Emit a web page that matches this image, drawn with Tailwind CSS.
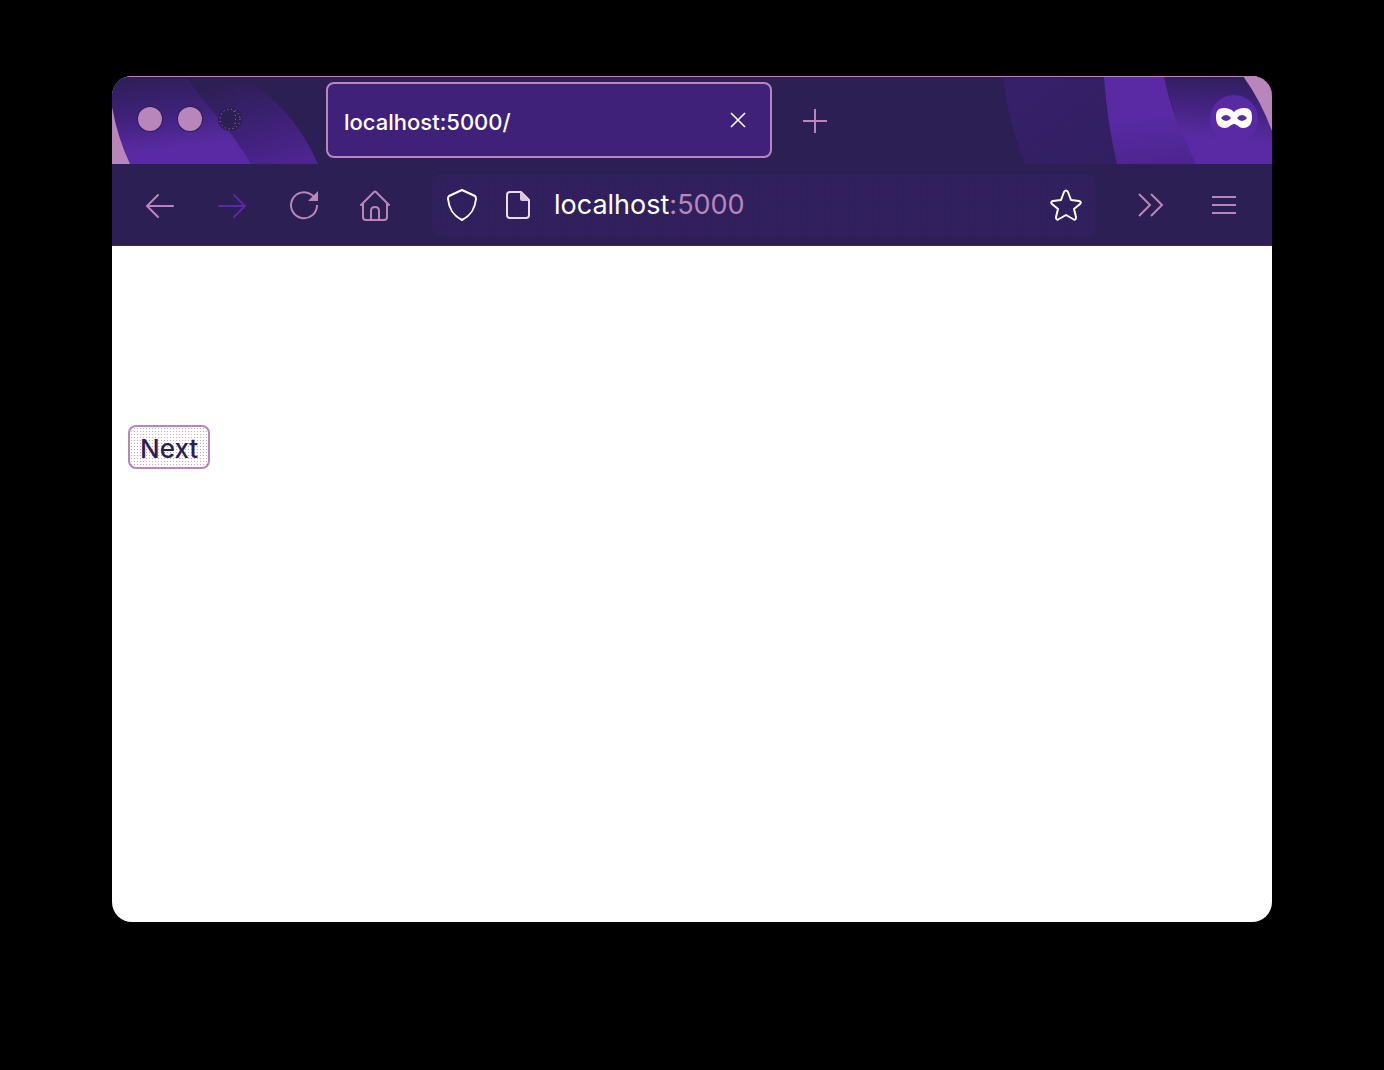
<!DOCTYPE html>
<html lang="en">
<head>
<meta charset="utf-8">
<title>localhost:5000/</title>
<script src="https://cdn.jsdelivr.net/npm/@tailwindcss/browser@4"></script>
</head>
<body class="flex min-h-screen flex-col bg-black px-28 pt-[76px] pb-[148px] font-['Inter','Liberation_Sans',sans-serif]">
<div class="flex grow flex-col overflow-hidden rounded-[20px] bg-white">
  <header class="bg-[#2b1f53]">
    <div class="relative flex h-22 items-center pr-4 pl-[26px] border-t border-[#b886bb]">
      <svg class="absolute -top-px left-0" width="206" height="88" viewBox="0 0 206 88" aria-hidden="true">
        <defs>
          <linearGradient id="l1" x1="0.3" y1="0" x2="0.5" y2="1"><stop offset="0" stop-color="#2f1f5b"/><stop offset=".4" stop-color="#3f2179"/><stop offset=".8" stop-color="#592aa3"/></linearGradient>
          <linearGradient id="l2" x1="0.3" y1="0" x2="0.8" y2="1"><stop offset="0" stop-color="#2b1f53"/><stop offset=".6" stop-color="#3f2179"/><stop offset="1" stop-color="#4d2590"/></linearGradient>
        </defs>
        <path d="M75 2Q110 2 142 9Q183 36 206 88H139Z" fill="url(#l2)"/>
        <path d="M0 2H75Q87 19 99 33Q123 61 139 88H0Z" fill="url(#l1)"/>
        <path d="M0 31Q6 63 18 88H0Z" fill="#b886bb"/>
        <path d="M0 0H206V1H0Z" fill="#b886bb"/>
      </svg>
      <svg class="absolute -top-px right-0" width="282" height="88" viewBox="0 0 282 88" aria-hidden="true">
        <defs>
          <linearGradient id="r1" x1="0" y1="0" x2="1" y2="1"><stop offset="0" stop-color="#37206b"/><stop offset="1" stop-color="#321f61"/></linearGradient>
          <linearGradient id="r2" x1="0.4" y1="0" x2="0.5" y2="1"><stop offset=".45" stop-color="#592aa3"/><stop offset="1" stop-color="#4d2590"/></linearGradient>
          <linearGradient id="r3" x1="0.5" y1="0" x2="0.4" y2="1"><stop offset="0" stop-color="#311f60"/><stop offset=".25" stop-color="#3f2179"/><stop offset=".7" stop-color="#592aa3"/></linearGradient>
        </defs>
        <path d="M13 2H114L127 88H35Q19 48 13 2Z" fill="url(#r1)"/>
        <path d="M174 2H282V88H200Z" fill="url(#r3)"/>
        <path d="M114 1H174Q181 33 193 59L206 88H127Q117 45 114 1Z" fill="url(#r2)"/>
        <path d="M253 0H282V55Q271 25 253 0Z" fill="#b886bb"/>
        <path d="M0 0H282V1H0Z" fill="#b886bb"/>
      </svg>
      <div class="relative flex gap-4 pb-1">
        <button aria-label="Close window" class="size-6 rounded-full bg-[#b886bb] ring-1 ring-[#2b1f53]"></button>
        <button aria-label="Minimize window" class="size-6 rounded-full bg-[#b886bb] ring-1 ring-[#2b1f53]"></button>
        <button aria-label="Zoom window" class="flex size-6 items-center justify-center rounded-full bg-[#2b1f53]"><svg width="22" height="22" viewBox="0 0 22 22" fill="none" stroke="#b886bb" stroke-dasharray="1 3"><circle cx="11" cy="11" r="10"/><path d="M15 3Q18 11 15 19"/></svg></button>
      </div>
      <div class="relative mb-px ml-[84px] flex h-19 w-[446px] items-center justify-between rounded-lg border-2 border-[#b886bb] bg-[#3f2179] pr-6 pl-4 text-[22px] font-medium text-white">
        <span class="pt-1">localhost:5000/</span>
        <button aria-label="Close tab"><svg width="16" height="16" viewBox="0 0 16 16" fill="none" stroke="#fff" stroke-width="1.6"><path d="M1 1 15 15M15 1 1 15"/></svg></button>
      </div>
      <button aria-label="New tab" class="ml-[31px]"><svg width="24" height="24" viewBox="0 0 24 24" fill="none" stroke="#b886bb" stroke-width="2"><path d="M12 0V24M0 12H24"/></svg></button>
      <div class="relative mb-1 ml-auto -mr-[2px] flex size-12 items-center justify-center rounded-full bg-[#592aa3]">
        <svg width="36" height="21" viewBox="0 0 36 21" aria-label="Private browsing" role="img"><path fill="#fff" fill-rule="evenodd" d="M8 0C12 0 15 1 18 4C21 1 24 0 28 0C34 0 36 3 36 9C36 16 33 20 27 20C23 20 21 16 18 16C15 16 13 20 9 20C3 20 0 16 0 9C0 3 2 0 8 0ZM5 10Q7 7 10 7Q13 7 15 10Q13 13 10 13Q7 13 5 10ZM21 10Q23 7 26 7Q29 7 31 10Q29 13 26 13Q23 13 21 10Z"/></svg>
      </div>
    </div>
    <nav class="flex h-[82px] items-center border-b border-[#3f2179] px-8 text-[#b886bb]">
      <div class="flex gap-10">
        <button aria-label="Back"><svg width="32" height="32" viewBox="0 0 32 32" fill="none" stroke="currentColor" stroke-width="2" stroke-linecap="round"><path d="M29 17H3M14 6 3 17 14 28"/></svg></button>
        <button aria-label="Forward" class="text-[#592aa3]"><svg width="32" height="32" viewBox="0 0 32 32" fill="none" stroke="currentColor" stroke-width="2" stroke-linecap="round"><path d="M3 17H29M18 6 29 17 18 28"/></svg></button>
        <button aria-label="Reload"><svg width="32" height="32" viewBox="0 0 32 32" fill="none" stroke="currentColor" stroke-width="2"><path d="M29 16A13 13 0 1 1 24 6L26 8"/><path d="M30 2V12H20Z" fill="currentColor" stroke="none"/></svg></button>
        <button aria-label="Home"><svg width="32" height="32" viewBox="0 0 32 32" fill="none" stroke="currentColor" stroke-width="2" stroke-linecap="round" stroke-linejoin="round"><path d="M1 16 14 3Q15 2 16 3L29 16M3 14V28Q3 31 6 31H24Q27 31 27 28V14M11 31V22Q11 18 15 18Q19 18 19 22V31"/></svg></button>
      </div>
      <div class="ml-10 flex h-[62px] grow items-center rounded-lg bg-[#331f62] bg-[radial-gradient(#39206e_1px,#2f1f5a_1px)] bg-[length:3px_3px] px-[14px] text-white">
        <svg width="32" height="34" viewBox="0 0 32 34" fill="none" stroke="#fff" stroke-width="2" stroke-linejoin="round" role="img" aria-label="Tracking protection"><path d="M16 2 29 8Q30 9 30 11C29 20 26 27 16 32C6 27 3 20 2 11Q2 9 3 8Z"/></svg>
        <svg class="ml-6" width="32" height="32" viewBox="0 0 32 32" fill="none" stroke="#ecdcec" stroke-width="2" stroke-linejoin="round" role="img" aria-label="Site information"><path d="M8 3H19L27 11V26Q27 29 24 29H8Q5 29 5 26V6Q5 3 8 3Z"/><path d="M18 3V10Q18 12 20 12H27L19 3Z" fill="#dcc3dd" stroke="none"/></svg>
        <a href="http://localhost:5000" class="ml-5 pt-0.5 text-[27px]">localhost<span class="text-[#b886bb]">:5000</span></a>
        <button aria-label="Bookmark this page" class="ml-auto"><svg width="32" height="32" viewBox="0 0 32 32" fill="none" stroke="#fff" stroke-width="2" stroke-linejoin="round"><path d="M14 3Q16 0 18 3L21 11 29 12Q32 13 30 15L24 20 26 28Q26 32 23 30L16 26 9 30Q6 32 6 28L8 20 2 15Q0 13 3 12L11 11Z"/></svg></button>
      </div>
      <button aria-label="More tools" class="ml-10"><svg width="28" height="28" viewBox="0 0 28 28" fill="none" stroke="currentColor" stroke-width="2"><path d="M3 3 14 14 3 25M15 3 26 14 15 25"/></svg></button>
      <button aria-label="Open menu" class="ml-11"><svg width="32" height="32" viewBox="0 0 32 32" stroke="currentColor" stroke-width="2"><path d="M4 8H28M4 16H28M4 24H28"/></svg></button>
    </nav>
  </header>
  <main class="grow px-4 pt-[179px]">
    <button class="flex h-11 items-center rounded-lg border-2 border-[#b886bb] bg-white bg-[radial-gradient(#c9a3cb_1px,#fff_1px)] bg-[length:3px_3px] px-2.5 pt-0.5 text-[26px] font-medium text-[#2b1f53]">Next</button>
  </main>
</div>
</body>
</html>
